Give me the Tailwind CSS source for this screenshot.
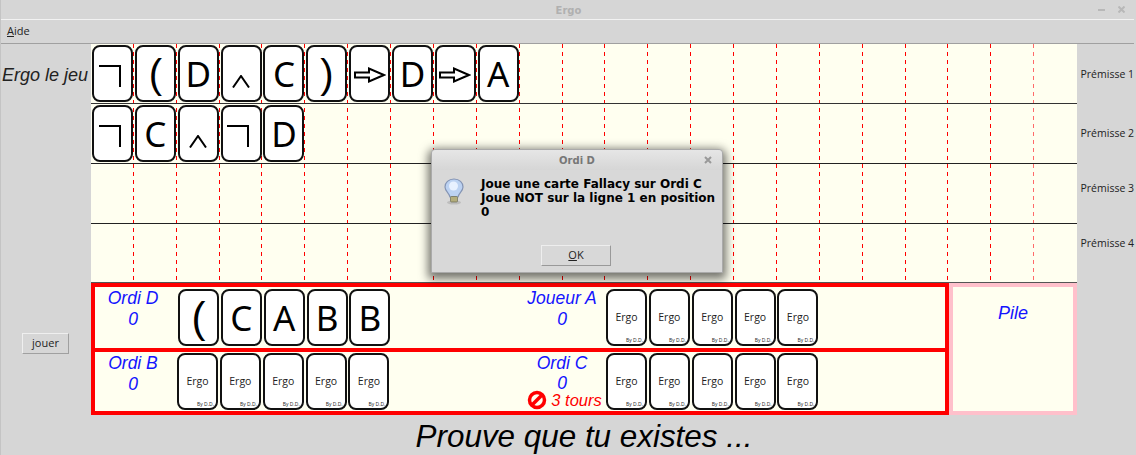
<!DOCTYPE html>
<html lang="fr">
<head>
<meta charset="utf-8">
<title>Ergo</title>
<script src="https://cdn.jsdelivr.net/npm/@tailwindcss/browser@4"></script>
</head>
<body class="m-0 bg-[#d6d6d6] overflow-hidden">
<div class="relative w-[1136px] h-[455px] flex flex-col bg-[#d6d6d6] border-l border-[#c4c4c4] font-['Open_Sans',sans-serif] text-[#222]">
  <!-- title bar -->
  <div class="relative h-[19px] pt-[1px] flex items-center justify-center text-[10px] font-bold text-[#b0b0b0] font-['DejaVu_Sans',sans-serif]">
    Ergo
    <div class="absolute right-[11px] top-[6px] flex items-center gap-[13px]">
      <span class="w-[7px] h-[2px] bg-[#b8b8b8]"></span>
      <svg width="7" height="7" viewBox="0 0 7 7"><path d="M0.5 0.5L6.5 6.5M6.5 0.5L0.5 6.5" stroke="#b8b8b8" stroke-width="2"/></svg>
    </div>
  </div>
  <!-- menu bar -->
  <div class="h-[25px] mr-[2px] flex items-center pl-[6px] border-t border-b border-t-[#f2f2f2] border-b-[#a0a0a0] text-[11px]">
    <span><span class="underline">A</span>ide</span>
  </div>

  <div class="flex flex-1 min-h-0">
    <!-- left column -->
    <div class="w-[90px] shrink-0 flex flex-col items-center">
      <div class="h-[62px] w-full flex items-center pl-[1px] text-[18px] italic whitespace-nowrap font-['Liberation_Sans',sans-serif]">Ergo le jeu</div>
      <div class="mt-[227px] w-[47px] h-[21px] flex items-center justify-center ml-[-1px] border border-t-[#efefef] border-l-[#efefef] border-r-[#a0a0a0] border-b-[#a0a0a0] text-[11px]">jouer</div>
    </div>

    <!-- centre column -->
    <div class="w-[986px] shrink-0 flex flex-col">
      <!-- board -->
      <div class="relative h-[239px] bg-[#fffff0]">
        <div class="absolute inset-0 grid grid-cols-[repeat(23,1fr)]">
          <div class="flex justify-end"><i class="block w-[1px] h-full bg-[repeating-linear-gradient(to_bottom,#f00_0_4px,transparent_4px_8px)]"></i></div>
          <div class="flex justify-end"><i class="block w-[1px] h-full bg-[repeating-linear-gradient(to_bottom,#f00_0_4px,transparent_4px_8px)]"></i></div>
          <div class="flex justify-end"><i class="block w-[1px] h-full bg-[repeating-linear-gradient(to_bottom,#f00_0_4px,transparent_4px_8px)]"></i></div>
          <div class="flex justify-end"><i class="block w-[1px] h-full bg-[repeating-linear-gradient(to_bottom,#f00_0_4px,transparent_4px_8px)]"></i></div>
          <div class="flex justify-end"><i class="block w-[1px] h-full bg-[repeating-linear-gradient(to_bottom,#f00_0_4px,transparent_4px_8px)]"></i></div>
          <div class="flex justify-end"><i class="block w-[1px] h-full bg-[repeating-linear-gradient(to_bottom,#f00_0_4px,transparent_4px_8px)]"></i></div>
          <div class="flex justify-end"><i class="block w-[1px] h-full bg-[repeating-linear-gradient(to_bottom,#f00_0_4px,transparent_4px_8px)]"></i></div>
          <div class="flex justify-end"><i class="block w-[1px] h-full bg-[repeating-linear-gradient(to_bottom,#f00_0_4px,transparent_4px_8px)]"></i></div>
          <div class="flex justify-end"><i class="block w-[1px] h-full bg-[repeating-linear-gradient(to_bottom,#f00_0_4px,transparent_4px_8px)]"></i></div>
          <div class="flex justify-end"><i class="block w-[1px] h-full bg-[repeating-linear-gradient(to_bottom,#f00_0_4px,transparent_4px_8px)]"></i></div>
          <div class="flex justify-end"><i class="block w-[1px] h-full bg-[repeating-linear-gradient(to_bottom,#f00_0_4px,transparent_4px_8px)]"></i></div>
          <div class="flex justify-end"><i class="block w-[1px] h-full bg-[repeating-linear-gradient(to_bottom,#f00_0_4px,transparent_4px_8px)]"></i></div>
          <div class="flex justify-end"><i class="block w-[1px] h-full bg-[repeating-linear-gradient(to_bottom,#f00_0_4px,transparent_4px_8px)]"></i></div>
          <div class="flex justify-end"><i class="block w-[1px] h-full bg-[repeating-linear-gradient(to_bottom,#f00_0_4px,transparent_4px_8px)]"></i></div>
          <div class="flex justify-end"><i class="block w-[1px] h-full bg-[repeating-linear-gradient(to_bottom,#f00_0_4px,transparent_4px_8px)]"></i></div>
          <div class="flex justify-end"><i class="block w-[1px] h-full bg-[repeating-linear-gradient(to_bottom,#f00_0_4px,transparent_4px_8px)]"></i></div>
          <div class="flex justify-end"><i class="block w-[1px] h-full bg-[repeating-linear-gradient(to_bottom,#f00_0_4px,transparent_4px_8px)]"></i></div>
          <div class="flex justify-end"><i class="block w-[1px] h-full bg-[repeating-linear-gradient(to_bottom,#f00_0_4px,transparent_4px_8px)]"></i></div>
          <div class="flex justify-end"><i class="block w-[1px] h-full bg-[repeating-linear-gradient(to_bottom,#f00_0_4px,transparent_4px_8px)]"></i></div>
          <div class="flex justify-end"><i class="block w-[1px] h-full bg-[repeating-linear-gradient(to_bottom,#f00_0_4px,transparent_4px_8px)]"></i></div>
          <div class="flex justify-end"><i class="block w-[1px] h-full bg-[repeating-linear-gradient(to_bottom,#f00_0_4px,transparent_4px_8px)]"></i></div>
          <div class="flex justify-end"><i class="block w-[1px] h-full bg-[repeating-linear-gradient(to_bottom,#ff6a6a_0_4px,transparent_4px_8px)]"></i></div>
        </div>
        <div class="relative flex flex-col">
          <!-- row 1 -->
          <div class="h-[60px] border-b border-[#333] pl-[1px] pt-[1px] flex gap-[1.87px] items-start">
            <div class="w-[41px] h-[57px] bg-white border-2 border-[#111] rounded-[8px] flex items-center justify-center"><span class="block w-[22px] h-[22px] mt-[5px] ml-[-6px] border-t-2 border-r-2 border-black"></span></div>
            <div class="w-[41px] h-[57px] bg-white border-2 border-[#111] rounded-[8px] flex items-center justify-center text-[40px] leading-none text-black font-['Liberation_Sans',sans-serif]">(</div>
            <div class="w-[41px] h-[57px] bg-white border-2 border-[#111] rounded-[8px] flex items-center justify-center text-[35px] leading-none text-black font-['Noto_Sans',sans-serif]">D</div>
            <div class="w-[41px] h-[57px] bg-white border-2 border-[#111] rounded-[8px] flex items-center justify-center"><svg class="mt-[15px]" width="18" height="13" viewBox="0 0 18 13" fill="none"><path d="M1 12.5L9 1L17 12.5" stroke="#000" stroke-width="2"/></svg></div>
            <div class="w-[41px] h-[57px] bg-white border-2 border-[#111] rounded-[8px] flex items-center justify-center text-[35px] leading-none text-black font-['Noto_Sans',sans-serif]">C</div>
            <div class="w-[41px] h-[57px] bg-white border-2 border-[#111] rounded-[8px] flex items-center justify-center text-[40px] leading-none text-black font-['Liberation_Sans',sans-serif]">)</div>
            <div class="w-[41px] h-[57px] bg-white border-2 border-[#111] rounded-[8px] flex items-center justify-center"><svg class="mt-[3px]" width="32" height="16" viewBox="0 0 32 16" fill="none"><path d="M1 5.5H15V1.5L30 8L15 14.5V10.5H1Z" stroke="#000" stroke-width="2"/></svg></div>
            <div class="w-[41px] h-[57px] bg-white border-2 border-[#111] rounded-[8px] flex items-center justify-center text-[35px] leading-none text-black font-['Noto_Sans',sans-serif]">D</div>
            <div class="w-[41px] h-[57px] bg-white border-2 border-[#111] rounded-[8px] flex items-center justify-center"><svg class="mt-[3px]" width="32" height="16" viewBox="0 0 32 16" fill="none"><path d="M1 5.5H15V1.5L30 8L15 14.5V10.5H1Z" stroke="#000" stroke-width="2"/></svg></div>
            <div class="w-[41px] h-[57px] bg-white border-2 border-[#111] rounded-[8px] flex items-center justify-center text-[35px] leading-none text-black font-['Noto_Sans',sans-serif]">A</div>
          </div>
          <!-- row 2 -->
          <div class="h-[60px] border-b border-[#222] pl-[1px] pt-[1px] flex gap-[1.87px] items-start">
            <div class="w-[41px] h-[57px] bg-white border-2 border-[#111] rounded-[8px] flex items-center justify-center"><span class="block w-[22px] h-[22px] mt-[5px] ml-[-6px] border-t-2 border-r-2 border-black"></span></div>
            <div class="w-[41px] h-[57px] bg-white border-2 border-[#111] rounded-[8px] flex items-center justify-center text-[35px] leading-none text-black font-['Noto_Sans',sans-serif]">C</div>
            <div class="w-[41px] h-[57px] bg-white border-2 border-[#111] rounded-[8px] flex items-center justify-center"><svg class="mt-[15px]" width="18" height="13" viewBox="0 0 18 13" fill="none"><path d="M1 12.5L9 1L17 12.5" stroke="#000" stroke-width="2"/></svg></div>
            <div class="w-[41px] h-[57px] bg-white border-2 border-[#111] rounded-[8px] flex items-center justify-center"><span class="block w-[22px] h-[22px] mt-[5px] ml-[-6px] border-t-2 border-r-2 border-black"></span></div>
            <div class="w-[41px] h-[57px] bg-white border-2 border-[#111] rounded-[8px] flex items-center justify-center text-[35px] leading-none text-black font-['Noto_Sans',sans-serif]">D</div>
          </div>
          <div class="h-[60px] border-b border-[#222]"></div>
          <div class="h-[59px] border-b border-[#555]"></div>
        </div>
      </div>

      <!-- hands -->
      <div class="flex h-[132px]">
        <div class="w-[858px] border-4 border-[#f00] flex flex-col bg-[#fffff0]">
          <!-- upper hands -->
          <div class="h-[65px] flex border-b-4 border-[#f00]">
            <div class="w-[76px] shrink-0 pt-[1px] flex flex-col items-center text-[17.5px] leading-[21px] italic text-[#1414ff] font-['Liberation_Sans',sans-serif] whitespace-nowrap"><span>Ordi D</span><span>0</span></div>
            <div class="w-[346px] shrink-0 ml-[7px] pt-[2px] flex gap-[1.87px]">
              <div class="w-[41px] h-[57px] bg-white border-2 border-[#111] rounded-[8px] flex items-center justify-center text-[42px] leading-none text-black font-['Liberation_Sans',sans-serif]">(</div>
              <div class="w-[41px] h-[57px] bg-white border-2 border-[#111] rounded-[8px] flex items-center justify-center text-[35px] leading-none text-black font-['Noto_Sans',sans-serif]">C</div>
              <div class="w-[41px] h-[57px] bg-white border-2 border-[#111] rounded-[8px] flex items-center justify-center text-[35px] leading-none text-black font-['Noto_Sans',sans-serif]">A</div>
              <div class="w-[41px] h-[57px] bg-white border-2 border-[#111] rounded-[8px] flex items-center justify-center text-[35px] leading-none text-black font-['Noto_Sans',sans-serif]">B</div>
              <div class="w-[41px] h-[57px] bg-white border-2 border-[#111] rounded-[8px] flex items-center justify-center text-[35px] leading-none text-black font-['Noto_Sans',sans-serif]">B</div>
            </div>
            <div class="w-[76px] shrink-0 pt-[1px] flex flex-col items-center text-[17.5px] leading-[21px] italic text-[#1414ff] font-['Liberation_Sans',sans-serif] whitespace-nowrap"><span>Joueur A</span><span>0</span></div>
            <div class="ml-[6px] pt-[2px] flex gap-[1.87px]">
              <div class="w-[41px] h-[57px] relative bg-white border-2 border-[#111] rounded-[8px] flex items-center justify-center text-[10.5px] text-[#222]">Ergo<span class="absolute right-[2px] bottom-[1px] text-[5px] leading-none">By D.D.</span></div>
              <div class="w-[41px] h-[57px] relative bg-white border-2 border-[#111] rounded-[8px] flex items-center justify-center text-[10.5px] text-[#222]">Ergo<span class="absolute right-[2px] bottom-[1px] text-[5px] leading-none">By D.D.</span></div>
              <div class="w-[41px] h-[57px] relative bg-white border-2 border-[#111] rounded-[8px] flex items-center justify-center text-[10.5px] text-[#222]">Ergo<span class="absolute right-[2px] bottom-[1px] text-[5px] leading-none">By D.D.</span></div>
              <div class="w-[41px] h-[57px] relative bg-white border-2 border-[#111] rounded-[8px] flex items-center justify-center text-[10.5px] text-[#222]">Ergo<span class="absolute right-[2px] bottom-[1px] text-[5px] leading-none">By D.D.</span></div>
              <div class="w-[41px] h-[57px] relative bg-white border-2 border-[#111] rounded-[8px] flex items-center justify-center text-[10.5px] text-[#222]">Ergo<span class="absolute right-[2px] bottom-[1px] text-[5px] leading-none">By D.D.</span></div>
            </div>
          </div>
          <!-- lower hands -->
          <div class="h-[59px] flex">
            <div class="w-[76px] shrink-0 pt-[1px] flex flex-col items-center text-[17.5px] leading-[21px] italic text-[#1414ff] font-['Liberation_Sans',sans-serif] whitespace-nowrap"><span>Ordi B</span><span>0</span></div>
            <div class="w-[347px] shrink-0 ml-[6px] pt-[1px] flex gap-[1.87px]">
              <div class="w-[41px] h-[57px] relative bg-white border-2 border-[#111] rounded-[8px] flex items-center justify-center text-[10.5px] text-[#222]">Ergo<span class="absolute right-[2px] bottom-[1px] text-[5px] leading-none">By D.D.</span></div>
              <div class="w-[41px] h-[57px] relative bg-white border-2 border-[#111] rounded-[8px] flex items-center justify-center text-[10.5px] text-[#222]">Ergo<span class="absolute right-[2px] bottom-[1px] text-[5px] leading-none">By D.D.</span></div>
              <div class="w-[41px] h-[57px] relative bg-white border-2 border-[#111] rounded-[8px] flex items-center justify-center text-[10.5px] text-[#222]">Ergo<span class="absolute right-[2px] bottom-[1px] text-[5px] leading-none">By D.D.</span></div>
              <div class="w-[41px] h-[57px] relative bg-white border-2 border-[#111] rounded-[8px] flex items-center justify-center text-[10.5px] text-[#222]">Ergo<span class="absolute right-[2px] bottom-[1px] text-[5px] leading-none">By D.D.</span></div>
              <div class="w-[41px] h-[57px] relative bg-white border-2 border-[#111] rounded-[8px] flex items-center justify-center text-[10.5px] text-[#222]">Ergo<span class="absolute right-[2px] bottom-[1px] text-[5px] leading-none">By D.D.</span></div>
            </div>
            <div class="w-[76px] shrink-0 pt-[1px] flex flex-col items-center text-[17.5px] leading-[21px] italic text-[#1414ff] font-['Liberation_Sans',sans-serif] whitespace-nowrap">
              <span>Ordi C</span><span class="leading-[19px]">0</span>
              <span class="flex items-center gap-[4px] h-[14px] ml-[5px] text-[#f00] text-[16.5px] leading-none">
                <svg class="shrink-0" width="20" height="20" viewBox="0 0 20 20" fill="none"><circle cx="10" cy="10" r="7.5" stroke="#f00" stroke-width="3.5"/><path d="M4.5 15.5L15.5 4.5" stroke="#f00" stroke-width="3.5"/></svg>
                <span class="leading-[14px]">3 tours</span>
              </span>
            </div>
            <div class="ml-[6px] pt-[1px] flex gap-[1.87px]">
              <div class="w-[41px] h-[57px] relative bg-white border-2 border-[#111] rounded-[8px] flex items-center justify-center text-[10.5px] text-[#222]">Ergo<span class="absolute right-[2px] bottom-[1px] text-[5px] leading-none">By D.D.</span></div>
              <div class="w-[41px] h-[57px] relative bg-white border-2 border-[#111] rounded-[8px] flex items-center justify-center text-[10.5px] text-[#222]">Ergo<span class="absolute right-[2px] bottom-[1px] text-[5px] leading-none">By D.D.</span></div>
              <div class="w-[41px] h-[57px] relative bg-white border-2 border-[#111] rounded-[8px] flex items-center justify-center text-[10.5px] text-[#222]">Ergo<span class="absolute right-[2px] bottom-[1px] text-[5px] leading-none">By D.D.</span></div>
              <div class="w-[41px] h-[57px] relative bg-white border-2 border-[#111] rounded-[8px] flex items-center justify-center text-[10.5px] text-[#222]">Ergo<span class="absolute right-[2px] bottom-[1px] text-[5px] leading-none">By D.D.</span></div>
              <div class="w-[41px] h-[57px] relative bg-white border-2 border-[#111] rounded-[8px] flex items-center justify-center text-[10.5px] text-[#222]">Ergo<span class="absolute right-[2px] bottom-[1px] text-[5px] leading-none">By D.D.</span></div>
            </div>
          </div>
        </div>
        <div class="w-[128px] border-4 border-[#ffc0cb] bg-[#fffff0] flex justify-center pt-[15px] text-[18px] leading-[22px] italic text-[#1414ff] font-['Liberation_Sans',sans-serif]">Pile</div>
      </div>

      <div class="flex-1 flex items-center justify-center pt-[3px] text-[31.4px] leading-none italic text-black font-['Liberation_Sans',sans-serif] whitespace-nowrap">Prouve que tu existes ...</div>
    </div>

    <!-- right column -->
    <div class="flex-1 text-[10.5px] whitespace-nowrap pl-[3.5px]">
      <div class="h-[59px] pt-[23px]">Prémisse 1</div>
      <div class="h-[55px] pt-[23px]">Prémisse 2</div>
      <div class="h-[55px] pt-[23px]">Prémisse 3</div>
      <div class="pt-[23px]">Prémisse 4</div>
    </div>
  </div>

  <!-- dialog -->
  <div class="absolute left-[430px] top-[149px] w-[292px] h-[124px] flex flex-col bg-[#d8d8d8] rounded-t-[4px] border border-[#aaa] shadow-[0_3px_10px_3px_rgba(0,0,0,0.55)]">
    <div class="relative h-[20px] flex items-center justify-center text-[10px] font-bold text-[#777] bg-[linear-gradient(#e6e6e6,#d6d6d6)] font-['DejaVu_Sans',sans-serif] rounded-t-[4px]">
      Ordi D
      <svg class="absolute right-[10px] top-[6px]" width="8" height="8" viewBox="0 0 8 8"><path d="M1 1L7 7M7 1L1 7" stroke="#999" stroke-width="2"/></svg>
    </div>
    <div class="flex flex-1 pl-[12px] pt-[7px]">
      <svg class="shrink-0 mt-[1px]" width="20" height="27" viewBox="0 0 20 27">
        <ellipse cx="10" cy="24.5" rx="7" ry="2" fill="#bdbdbd"/>
        <path d="M10 1C4.5 1 1 4.6 1 9C1 13 5 14.5 6 19H14C15 14.5 19 13 19 9C19 4.6 15.5 1 10 1Z" fill="#bcd2f2" stroke="#8494b4" stroke-width="1.2"/>
        <circle cx="9.5" cy="8" r="4.5" fill="#e8f1ff"/>
        <rect x="6.5" y="18.5" width="7" height="5.5" rx="1" fill="#b3ad7c" stroke="#6b6b55" stroke-width="0.7"/>
      </svg>
      <div class="ml-[17px] text-[12px] leading-[14px] font-bold text-black font-['DejaVu_Sans',sans-serif] whitespace-nowrap">Joue une carte Fallacy sur Ordi C<br>Joue NOT sur la ligne 1 en position<br>0</div>
    </div>
    <div class="flex justify-center pb-[6px] pr-[2px]">
      <div class="w-[70px] h-[21px] flex items-center justify-center border border-t-[#eee] border-l-[#eee] border-r-[#999] border-b-[#999] text-[11px]"><span><span class="underline">O</span>K</span></div>
    </div>
  </div>
</div>
</body>
</html>
